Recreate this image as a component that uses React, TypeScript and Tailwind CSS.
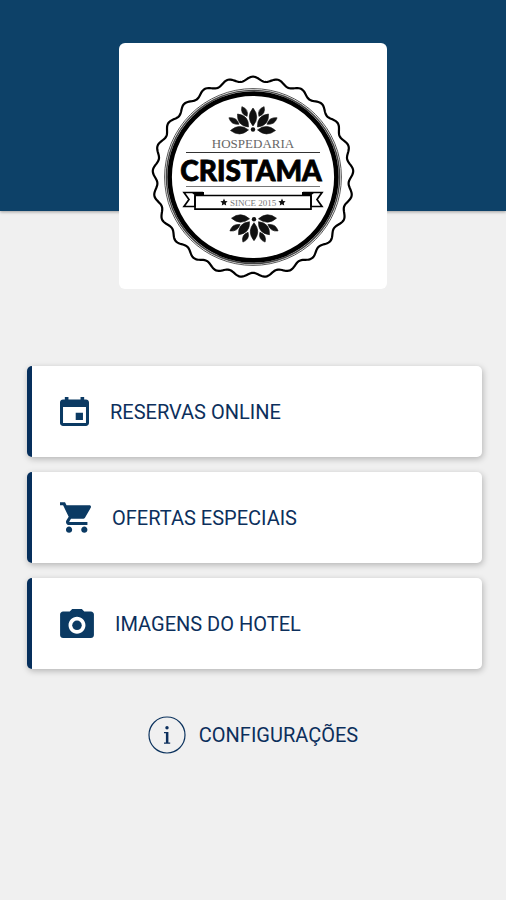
import { IoMdCalendar, IoMdCamera, IoMdCart } from 'react-icons/io'

const menu = [
  { label: 'RESERVAS ONLINE', Icon: IoMdCalendar, viewBox: '64 64 384 384', size: 'w-[29px] h-[29px]' },
  { label: 'OFERTAS ESPECIAIS', Icon: IoMdCart, viewBox: '48 51 416 410', size: 'w-[31px] h-[31px]' },
  { label: 'IMAGENS DO HOTEL', Icon: IoMdCamera, viewBox: '32 64 448 384', size: 'w-[34px] h-[29px]' },
]

// wavy outline of the seal: 25 rounded teeth around the circle
const wave = () => {
  const points: string[] = []
  for (let i = 0; i < 500; i++) {
    const a = (i / 500) * Math.PI * 2
    const r = 98.1 + 2.3 * Math.cos(25 * a)
    points.push(`${(r * Math.sin(a)).toFixed(2)} ${(-r * Math.cos(a)).toFixed(2)}`)
  }
  return `M${points.join('L')}Z`
}

const leaves = [
  { x: 0, y: -60, angle: 0, length: 18, width: 7.5 },
  { x: -10, y: -56.5, angle: -40, length: 17, width: 8 },
  { x: 10, y: -56.5, angle: 40, length: 17, width: 8 },
  { x: -8.5, y: -65.5, angle: -28, length: 11, width: 5 },
  { x: 8.5, y: -65.5, angle: 28, length: 11, width: 5 },
  { x: -19, y: -56, angle: -58, length: 12, width: 5 },
  { x: 19, y: -56, angle: 58, length: 12, width: 5 },
  { x: -13.5, y: -46.8, angle: -92, length: 18, width: 7.5 },
  { x: 13.5, y: -46.8, angle: 92, length: 18, width: 7.5 },
]

const Flower = ({ transform }: { transform?: string }) => (
  <g transform={transform}>
    {leaves.map(({ x, y, angle, length, width }) => (
      <path
        key={`${x},${y}`}
        transform={`translate(${x} ${y}) rotate(${angle})`}
        d={`M0 ${-length / 2}Q${width} 0 0 ${length / 2}Q${-width} 0 0 ${-length / 2}Z`}
        fill="#111"
        stroke="#111"
        strokeWidth="0.6"
      />
    ))}
    <circle cx="0" cy="-47.5" r="2.2" fill="#111" />
  </g>
)

const Logo = () => (
  <svg viewBox="-103 -103 206 206" className="w-[206px] h-[206px]" role="img" aria-label="Hospedaria Cristama">
    <path d={wave()} fill="none" stroke="#000" strokeWidth="2.2" />
    <circle r="88.4" fill="none" stroke="#555" strokeWidth="1" />
    <circle r="86.6" fill="none" stroke="#444" strokeWidth="1.4" />
    <circle r="83.4" fill="none" stroke="#000" strokeWidth="4.6" />
    <Flower />
    <Flower transform="translate(1 -5.3) scale(1 -1)" />
    <text x="0" y="-29" textAnchor="middle" fill="#666" className="font-['Liberation_Serif',serif] text-[13px]">
      HOSPEDARIA
    </text>
    <path d="M-67-24.5H67" stroke="#333" strokeWidth="1.2" />
    <text
      x="-2"
      y="4"
      textAnchor="middle"
      fill="#000"
      stroke="#000"
      strokeWidth="0.8"
      className="font-['Lato',sans-serif] text-[28px] font-black"
    >
      CRISTAMA
    </text>
    <path d="M-67 9.5H67" stroke="#777" strokeWidth="1.2" />
    <g fill="none" stroke="#000" strokeWidth="1.7">
      <path d="M-50 15.5H-69L-64 22.5L-69 29.5H-58V18.5" />
      <path d="M50 15.5H69L64 22.5L69 29.5H58V18.5" />
      <path d="M-58 18.5H58V32.2H-58Z" />
    </g>
    <path d="M-62 15H-49V18.5H-58ZM62 15H49V18.5H58Z" fill="#000" />
    <path d="M-29 21.6l1.1 2.3 2.5.3-1.8 1.7.4 2.5-2.2-1.2-2.2 1.2.4-2.5-1.8-1.7 2.5-.3z" fill="#111" />
    <path d="M29 21.6l1.1 2.3 2.5.3-1.8 1.7.4 2.5-2.2-1.2-2.2 1.2.4-2.5-1.8-1.7 2.5-.3z" fill="#111" />
    <text x="0" y="29" textAnchor="middle" fill="#777" className="font-['Liberation_Serif',serif] text-[9px]">
      SINCE 2015
    </text>
  </svg>
)

const InfoIcon = () => (
  <svg viewBox="0 0 38 38" className="w-[38px] h-[38px]" aria-hidden="true">
    <circle cx="19" cy="19" r="18" fill="none" stroke="#0c335e" strokeWidth="1.2" />
    <circle cx="19" cy="11.8" r="1.7" fill="#0c2f5c" />
    <path d="M16 16h4.4v10.6h1.8v1.2H16v-1.2h1.9v-9.4H16z" fill="#0c2f5c" />
  </svg>
)

export default function App() {
  return (
    <div className="min-h-screen bg-[#f0f0f0] font-['Roboto',sans-serif] text-[#0c2f5c]">
      <header className="flex h-[211px] items-start justify-center bg-[#0d4168] pt-[43px] shadow-[0_1px_3px_rgba(0,0,0,0.35)]">
        <div className="flex h-[246px] w-[268px] shrink-0 justify-center rounded-md bg-white pt-[31px]">
          <Logo />
        </div>
      </header>

      <main className="px-6 pt-[155px]">
        <nav className="flex flex-col gap-[15px] pl-[3px]">
          {menu.map(({ label, Icon, viewBox, size }) => (
            <button
              key={label}
              type="button"
              className="flex h-[91px] w-full cursor-pointer items-center gap-[21px] rounded-[5px] border-l-[5px] border-[#062f5c] bg-white pl-7 text-left text-[20px] leading-6 shadow-[1px_2px_6px_rgba(0,0,0,0.25)]"
            >
              <Icon viewBox={viewBox} className={`${size} shrink-0 text-[#0b3a63]`} aria-hidden="true" />
              {label}
            </button>
          ))}
        </nav>

        <div className="mt-[47px] flex justify-center">
          <button type="button" className="flex cursor-pointer items-center gap-[13px] text-[20px] leading-6">
            <InfoIcon />
            CONFIGURAÇÕES
          </button>
        </div>
      </main>
    </div>
  )
}
